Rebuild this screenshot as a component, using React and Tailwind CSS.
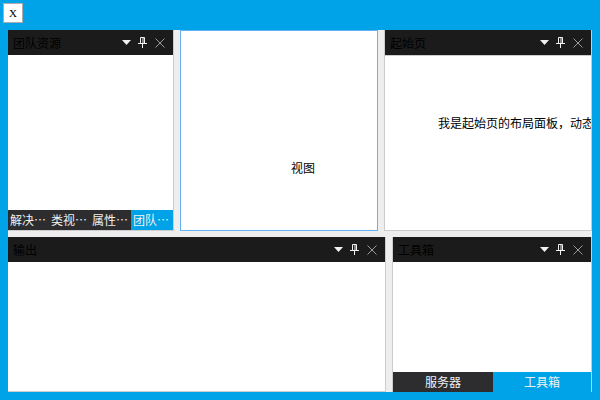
import React from "react";

function Icons() {
  return (
    <div className="ml-auto flex items-center pr-[8px]">
      <svg width="9" height="5" viewBox="0 0 9 5" className="block">
        <polygon points="0,0 9,0 4.5,5" fill="#f1f1f1" />
      </svg>
      <svg width="9" height="11" viewBox="0 0 9 11" className="block ml-[7px]">
        <path d="M2.5 0.5 H6.5 V6.5 M2.5 0.5 V6.5" stroke="#f1f1f1" strokeWidth="1" fill="none" />
        <path d="M5 0.5 V6.5" stroke="#f1f1f1" strokeWidth="1" fill="none" />
        <path d="M0 6.5 H9" stroke="#f1f1f1" strokeWidth="1" fill="none" />
        <path d="M4.5 6.5 V11" stroke="#f1f1f1" strokeWidth="1" fill="none" />
      </svg>
      <svg width="10" height="10" viewBox="0 0 10 10" className="block ml-[8px]">
        <path d="M0.5 0.5 L9.5 9.5 M9.5 0.5 L0.5 9.5" stroke="#9a9a9a" strokeWidth="1" fill="none" />
      </svg>
    </div>
  );
}

function Header({ title }) {
  return (
    <div className="h-[25px] shrink-0 bg-[#1b1b1c] flex items-center pl-[5px]">
      <span className="text-[12px] leading-none text-black">{title}</span>
      <Icons />
    </div>
  );
}

export default function App() {
  return (
    <div className="w-[600px] h-[400px] bg-[#00a2e8] flex flex-col font-['Noto_Sans_CJK_SC',sans-serif]">
      <div className="h-[30px] shrink-0 pt-[3px] pl-[3px]">
        <div className="w-[20px] h-[20px] bg-white border border-[#adadad] flex items-center justify-center text-[11px] leading-none text-black font-['Liberation_Serif',serif]">
          X
        </div>
      </div>
      <div className="mx-[8px] h-[362px] bg-[#eeeeee] flex flex-col gap-[6px]">
        <div className="h-[201px] flex">
          <div className="w-[166px] flex flex-col bg-white border-r border-b border-[#cccccc]">
            <Header title="团队资源" />
            <div className="flex-1 bg-white" />
            <div className="h-[20px] shrink-0 flex bg-[#2d2d30] text-[12px] leading-none text-[#f1f1f1]">
              <div className="w-[41px] pl-[2px] flex items-center whitespace-nowrap">解决…</div>
              <div className="w-[41px] pl-[2px] flex items-center whitespace-nowrap">类视…</div>
              <div className="w-[41px] pl-[2px] flex items-center whitespace-nowrap">属性…</div>
              <div className="flex-1 pl-[2px] flex items-center whitespace-nowrap bg-[#00a2e8]">团队…</div>
            </div>
          </div>
          <div className="ml-[6px] w-[198px] bg-white border border-[#62b2f4] pl-[110px] pt-[123px]">
            <span className="text-[12px] leading-none text-black">视图</span>
          </div>
          <div className="ml-[6px] flex-1 min-w-0 flex flex-col bg-white border-x border-b border-[#cccccc]">
            <Header title="起始页" />
            <div className="flex-1 overflow-hidden border-t border-[#cccccc] pl-[53px] pt-[61px]">
              <div className="whitespace-nowrap text-[12px] leading-none text-black">我是起始页的布局面板，动态</div>
            </div>
          </div>
        </div>
        <div className="h-[155px] flex gap-[6px]">
          <div className="w-[378px] flex flex-col bg-white border-r border-b border-[#cccccc]">
            <Header title="输出" />
            <div className="flex-1 bg-white" />
          </div>
          <div className="flex-1 flex flex-col bg-white border-x border-[#cccccc]">
            <Header title="工具箱" />
            <div className="flex-1 bg-white" />
            <div className="h-[20px] shrink-0 flex text-[12px] leading-none text-[#f1f1f1]">
              <div className="w-[100px] bg-[#2d2d30] flex items-center justify-center">服务器</div>
              <div className="flex-1 bg-[#00a2e8] flex items-center justify-center">工具箱</div>
            </div>
          </div>
        </div>
      </div>
    </div>
  );
}
